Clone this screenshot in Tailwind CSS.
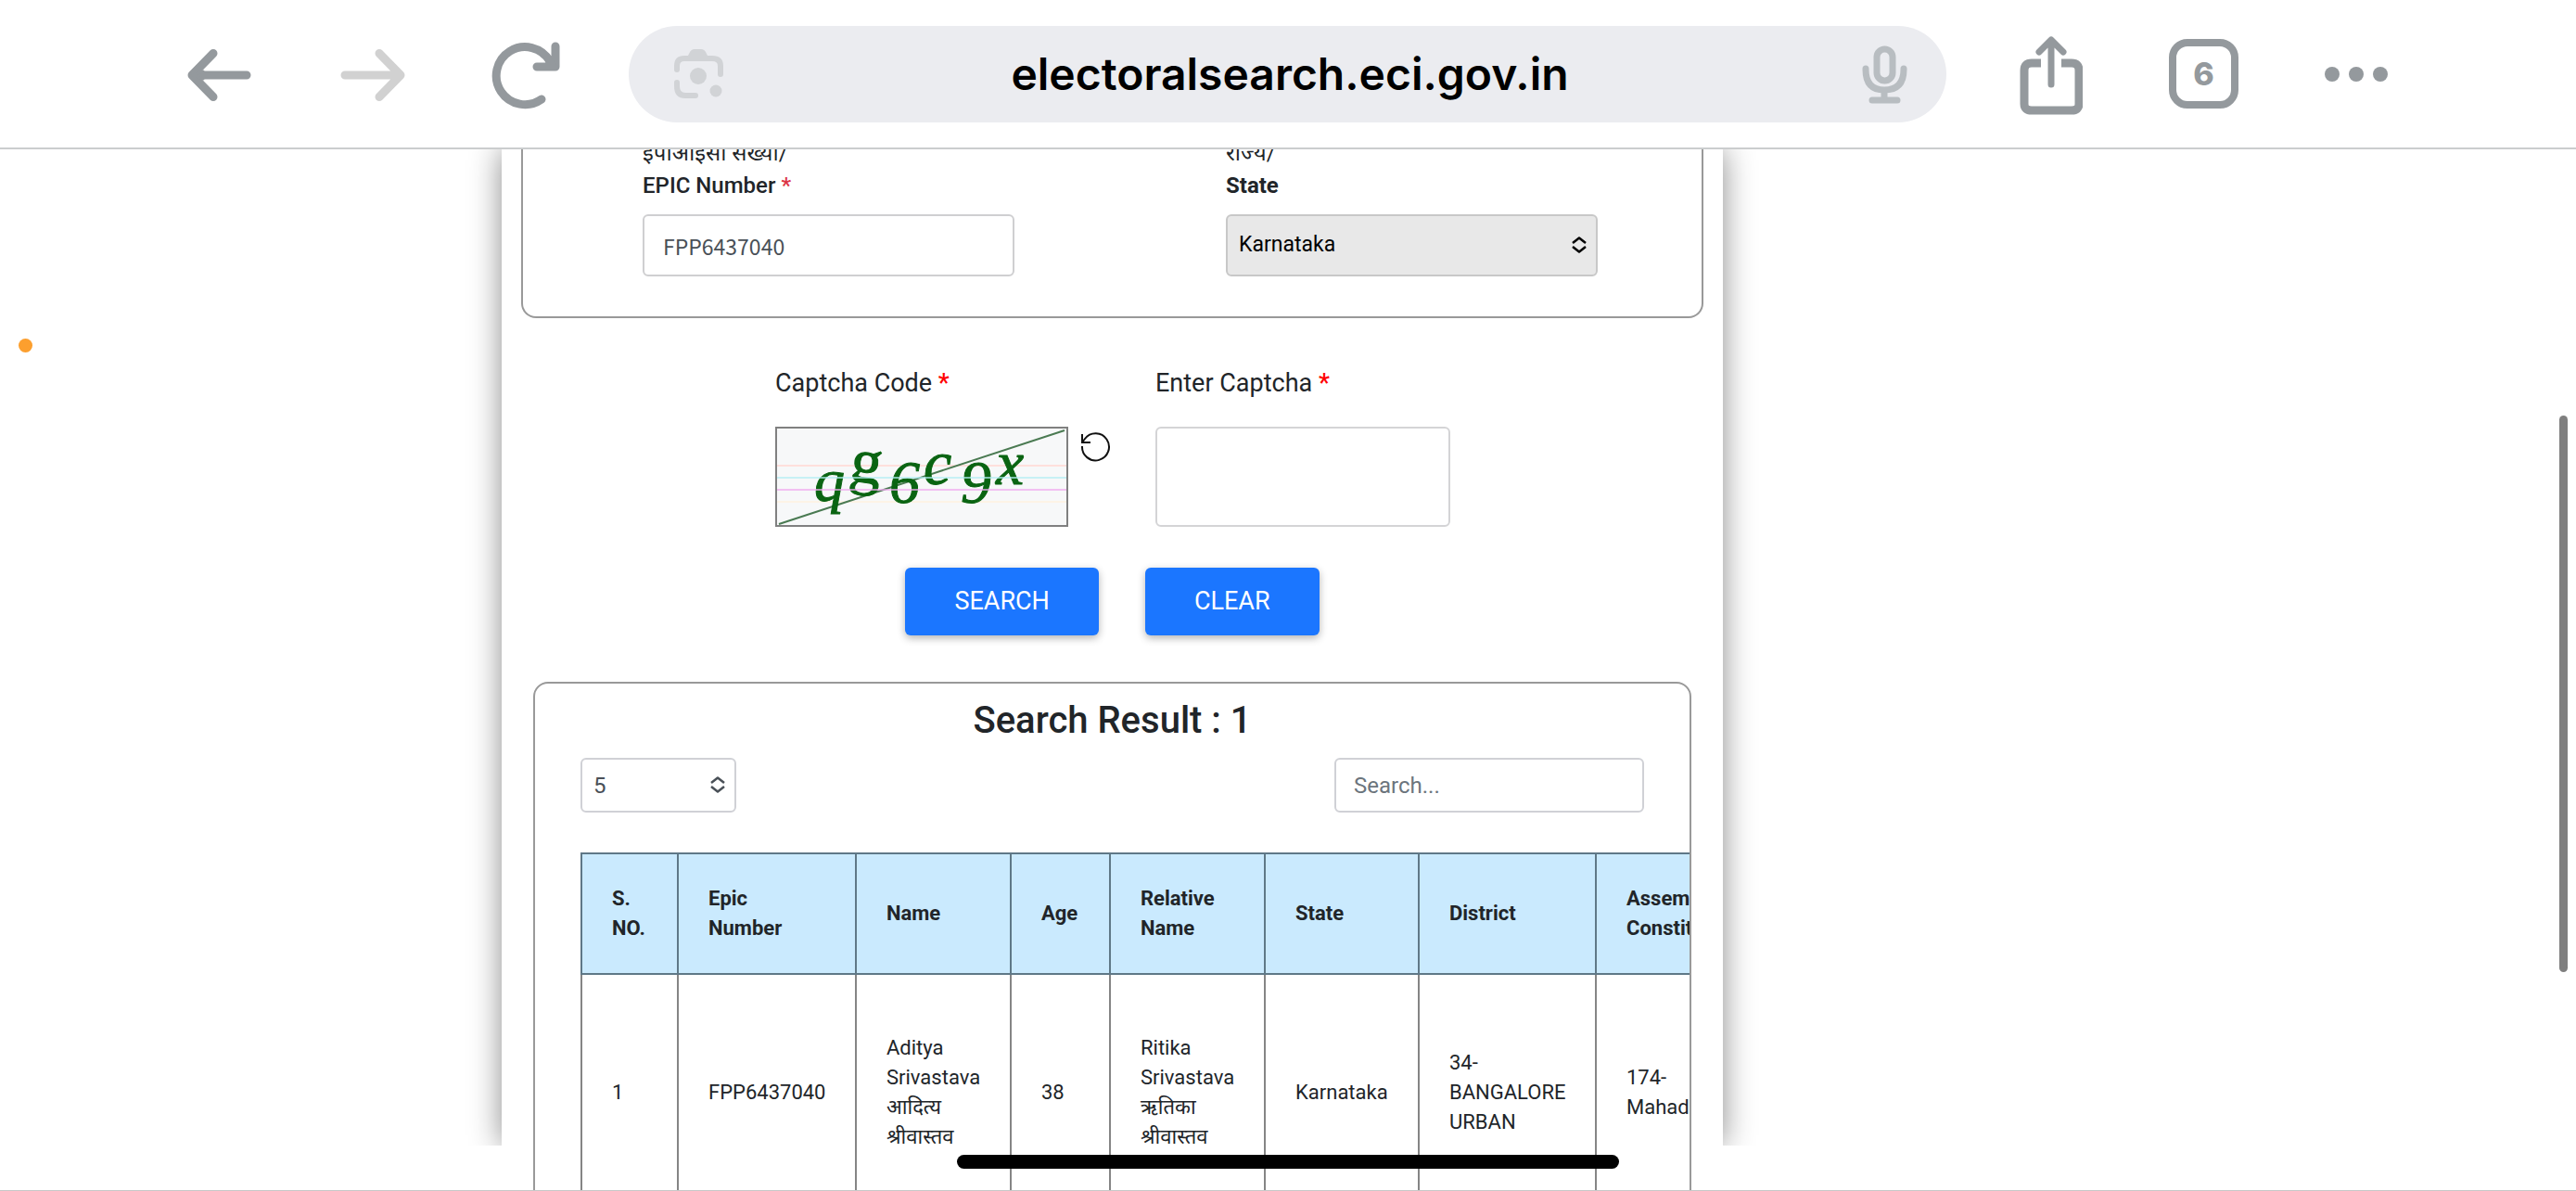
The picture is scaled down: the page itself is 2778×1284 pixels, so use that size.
<!DOCTYPE html>
<html lang="en">
  <head>
    <meta charset="UTF-8" />
    <meta name="viewport" content="width=device-width, initial-scale=1.0" />
    <title>Electoral Search</title>
    <!-- Tailwind CSS CDN -->
    <script src="https://cdn.jsdelivr.net/npm/@tailwindcss/browser@4"></script>
  </head>
  <body class="relative flex h-screen flex-col overflow-hidden border-b border-[#c8c8c8] bg-white font-[Roboto,'Noto_Sans',sans-serif] text-[#212529]">
    <!-- Browser toolbar -->
    <header class="flex h-[161px] shrink-0 items-center justify-between border-b-2 border-[#cbcdce] pl-[198px] pr-[203px] text-[#94999d]">
      <div class="flex items-center gap-[87px]">
        <button type="button" aria-label="Back">
          <svg class="h-[78px] w-[78px]" viewBox="0 0 78 78" fill="none" stroke="currentColor" stroke-width="9" stroke-linecap="round" stroke-linejoin="round">
            <path d="M68 40H10M32 16.500L9 40L32 63.500" />
            <path d="M10 40L21 36V44Z" fill="currentColor" stroke-width="3" />
          </svg>
        </button>
        <button type="button" aria-label="Forward" class="text-[#d1d1d1]" disabled>
          <svg class="h-[78px] w-[78px]" viewBox="0 0 78 78" fill="none" stroke="currentColor" stroke-width="9" stroke-linecap="round" stroke-linejoin="round">
            <path d="M9 40H68M46 16.500L69 40L46 63.500" />
          </svg>
        </button>
        <button type="button" aria-label="Reload">
          <svg class="h-[78px] w-[78px]" viewBox="0 0 78 78" fill="none" stroke="currentColor" stroke-width="9" stroke-linecap="round" stroke-linejoin="round">
            <path d="M56 66A31 31 0 1 1 65 25M71 9V31H51" />
            <path d="M71 31L63 21V31Z" fill="currentColor" stroke-width="5" />
          </svg>
        </button>
      </div>
      <div class="ml-[72px] mr-[79px] flex h-[104px] grow items-center justify-between rounded-full bg-[#ebecf0] pl-[46px] pr-[41px]">
        <button type="button" aria-label="Search by image" class="text-[#d1d3d6]">
          <svg class="h-[60px] w-[56px]" viewBox="0 0 56 60" fill="none" stroke="currentColor" stroke-width="6" stroke-linecap="round">
            <path d="M6 25V21Q6 13 14 13H44Q53 13 53 21V30M6 39V43Q6 53 15 53H26" />
            <path d="M16 14L19 8Q21 3 25 3H32Q36 3 38 8L41 14Z" fill="currentColor" stroke="none" />
            <circle cx="29" cy="32" r="9" fill="currentColor" stroke="none" />
            <circle cx="48" cy="48" r="6.500" fill="currentColor" stroke="none" />
          </svg>
        </button>
        <a href="#" class="font-[Inter,Roboto,sans-serif] text-[48px] font-semibold text-black">electoralsearch.eci.gov.in</a>
        <button type="button" aria-label="Voice search" class="text-[#b8bdc1]">
          <svg class="h-[64px] w-[56px]" viewBox="-4 0 56 64" fill="none" stroke="currentColor" stroke-width="7" stroke-linecap="round">
            <rect x="18" y="5" width="17" height="34" rx="8.500" />
            <path d="M6 26V27Q6 49 26 49Q47 49 47 27V26M26 49V60M13 60H40" />
          </svg>
        </button>
      </div>
      <div class="flex items-center gap-[93px]">
        <button type="button" aria-label="Share">
          <svg class="h-[88px] w-[68px]" viewBox="4 0 68 88" fill="none" stroke="currentColor" stroke-width="9">
            <path d="M27 32H17Q9 32 9 40V76Q9 83 17 83H60Q68 83 68 76V40Q68 32 60 32H49" />
            <path d="M38 55V9M25 20L38 7L51 20" stroke-width="7" stroke-linecap="round" stroke-linejoin="round" />
          </svg>
        </button>
        <button type="button" aria-label="Tabs" class="flex h-[75px] w-[75px] items-center justify-center rounded-[20px] border-8 border-[#94999d] font-[Inter,Roboto,sans-serif] text-[34px] font-extrabold">6</button>
        <button type="button" aria-label="More" class="flex items-center gap-[10px]">
          <span class="size-4 rounded-full bg-[#94999d]"></span>
          <span class="size-4 rounded-full bg-[#94999d]"></span>
          <span class="size-4 rounded-full bg-[#94999d]"></span>
        </button>
      </div>
    </header>

    <!-- Page viewport -->
    <div class="min-h-0 grow overflow-hidden">
      <main class="relative ml-[541px] mr-[920px] flow-root h-full px-[21px]">
        <div class="absolute inset-x-0 top-0 bottom-[48px] shadow-[0_0_32px_rgb(0_0_0/0.46)] [clip-path:inset(0_-60px)]"></div>

        <!-- Search details -->
        <section class="relative -mt-[13px] grid grid-cols-2 gap-x-[228px] rounded-b-2xl border-2 border-t-0 border-[#999999] pb-[43px] pl-[129px] pr-[112px]">
          <label for="epic" class="text-[24px] leading-[35px]">
            <span class="block">ईपीआईसी संख्या/</span>
            <span class="font-medium">EPIC Number</span> <span class="font-medium text-[#dc3545]">*</span>
          </label>
          <label for="state" class="text-[24px] leading-[35px]">
            <span class="block">राज्य/</span>
            <span class="font-bold">State</span>
          </label>
          <input id="epic" type="text" value="FPP6437040" class="mt-[13px] h-[67px] w-full rounded-md border-2 border-[#cfcfd1] px-5 font-['Noto_Sans_CJK_SC',sans-serif] text-[23px] text-[#495057]" />
          <div class="relative mt-[13px]">
            <select id="state" class="h-[67px] w-full appearance-none rounded-md border-2 border-[#c8c8c8] bg-[#e8e8e8] px-3 text-[23px] text-black">
              <option>Karnataka</option>
            </select>
            <svg class="pointer-events-none absolute right-3 top-6 h-[18px] w-4" viewBox="0 0 16 18" fill="none" stroke="#000000" stroke-width="2.500" stroke-linejoin="round">
              <path d="M1 7L8 1.500L15 7M1 11L8 16.500L15 11" />
            </svg>
          </div>
        </section>

        <!-- Captcha -->
        <section class="relative mt-[50px] flex gap-12 pl-[274px] text-[27px] leading-10">
          <div>
            <p>Captcha Code <span class="font-medium text-[#ff0000]">*</span></p>
            <div class="mt-[27px] flex gap-3">
              <svg class="h-[108px] w-[316px] border-2 border-[#808080] bg-[#f7f8f9]" viewBox="0 0 312 104" role="img" aria-label="Captcha" font-family="Liberation Serif, serif" font-style="italic" fill="#0a6412" stroke="#0a6412">
                <path d="M0 40H312" stroke="#ffe0dc" stroke-width="2" />
                <path d="M0 79H312" stroke="#fdf3e6" stroke-width="2" />
                <path d="M2 103L310 2" stroke="#4a7a52" stroke-width="2" />
                <text x="40" y="78" font-size="66">q</text>
                <text x="78" y="58" font-size="68" font-style="normal" transform="rotate(8 95 50)">g</text>
                <text x="121" y="80" font-size="66">6</text>
                <text x="158" y="60" font-size="68">c</text>
                <text x="198" y="80" font-size="66">9</text>
                <text x="236" y="60" font-size="68">x</text>
                <path d="M0 53H312" stroke="#b2eef4" stroke-opacity="0.7" stroke-width="2" />
                <path d="M0 66H312" stroke="#f0a8f0" stroke-opacity="0.7" stroke-width="2" />
              </svg>
              <button type="button" aria-label="Refresh captcha" class="self-start pt-1">
                <svg class="h-[34px] w-[34px]" viewBox="0 0 34 34" fill="none" stroke="#111111" stroke-width="2">
                  <path d="M3 17A14.500 14.500 0 1 0 6 9L3 13M3 4V13H12" />
                </svg>
              </button>
            </div>
          </div>
          <div>
            <label for="captcha">Enter Captcha <span class="font-medium text-[#ff0000]">*</span></label>
            <input id="captcha" type="text" class="mt-[27px] block h-[108px] w-[318px] rounded-md border-2 border-[#d4d4d6] px-5" />
          </div>
        </section>
        <div class="relative mt-11 flex justify-center gap-[50px] text-[27px] text-white">
          <button type="button" class="h-[73px] rounded-md bg-[#1b76ff] px-[53px] shadow-[0_3px_8px_rgb(0_0_0/0.3)]">SEARCH</button>
          <button type="button" class="h-[73px] rounded-md bg-[#1b76ff] px-[53px] shadow-[0_3px_8px_rgb(0_0_0/0.3)]">CLEAR</button>
        </div>

        <!-- Results -->
        <section class="relative mx-[13px] mt-[50px] h-[640px] overflow-hidden rounded-t-2xl border-2 border-[#999999] pl-[49px]">
          <h2 class="mr-[49px] mt-[14px] text-center text-[40px] font-medium leading-[52px]">Search Result : 1</h2>
          <div class="mr-[49px] mt-[14px] flex justify-between text-[24px]">
            <div class="relative">
              <select aria-label="Rows per page" class="h-[59px] w-[168px] appearance-none rounded-md border-2 border-[#d0d1d6] px-3 text-[#495057]">
                <option>5</option>
              </select>
              <svg class="pointer-events-none absolute right-3 top-5 h-[18px] w-4" viewBox="0 0 16 18" fill="none" stroke="#495057" stroke-width="2.500" stroke-linejoin="round">
                <path d="M1 7L8 1.500L15 7M1 11L8 16.500L15 11" />
              </svg>
            </div>
            <input type="search" aria-label="Search results" placeholder="Search..." class="h-[59px] w-[334px] rounded-md border-2 border-[#d0d1d6] px-[19px] placeholder:text-[#6c757d]" />
          </div>
          <table class="mt-[43px] w-[1400px] table-fixed border-collapse text-left text-[22px] leading-8">
            <colgroup>
              <col class="w-[104px]" />
              <col class="w-[192px]" />
              <col class="w-[167px]" />
              <col class="w-[107px]" />
              <col class="w-[167px]" />
              <col class="w-[166px]" />
              <col class="w-[191px]" />
              <col />
            </colgroup>
            <thead class="h-[130px] bg-[#caeafe]">
              <tr>
                <th class="border-2 border-[#5f7887] pl-8 font-bold">S.<br />NO.</th>
                <th class="border-2 border-[#5f7887] pl-8 font-bold">Epic<br />Number</th>
                <th class="border-2 border-[#5f7887] pl-8 font-bold">Name</th>
                <th class="border-2 border-[#5f7887] pl-8 font-bold">Age</th>
                <th class="border-2 border-[#5f7887] pl-8 font-bold">Relative<br />Name</th>
                <th class="border-2 border-[#5f7887] pl-8 font-bold">State</th>
                <th class="border-2 border-[#5f7887] pl-8 font-bold">District</th>
                <th class="border-2 border-[#5f7887] pl-8 font-bold">Assembly<br />Constituency</th>
              </tr>
            </thead>
            <tbody>
              <tr class="h-[256px]">
                <td class="border-2 border-[#858585] pl-8">1</td>
                <td class="border-2 border-[#858585] pl-8">FPP6437040</td>
                <td class="border-2 border-[#858585] pl-8">Aditya<br />Srivastava<br />आदित्य<br />श्रीवास्तव</td>
                <td class="border-2 border-[#858585] pl-8">38</td>
                <td class="border-2 border-[#858585] pl-8">Ritika<br />Srivastava<br />ऋतिका<br />श्रीवास्तव</td>
                <td class="border-2 border-[#858585] pl-8">Karnataka</td>
                <td class="border-2 border-[#858585] pl-8">34-<br />BANGALORE<br />URBAN</td>
                <td class="border-2 border-[#858585] pl-8">174-<br />Mahadevapura</td>
              </tr>
            </tbody>
          </table>
        </section>
      </main>
    </div>

    <!-- Recording dot, scroll thumb and home indicator -->
    <div class="absolute left-5 top-[365px] size-[15px] rounded-full bg-[#fc9f2e]"></div>
    <div class="absolute right-[9px] top-[448px] h-[600px] w-[9px] rounded-full bg-[#7f7f7f]"></div>
    <div class="absolute bottom-[23px] left-1/2 h-[15px] w-[714px] -translate-x-1/2 rounded-full bg-black"></div>
  </body>
</html>
